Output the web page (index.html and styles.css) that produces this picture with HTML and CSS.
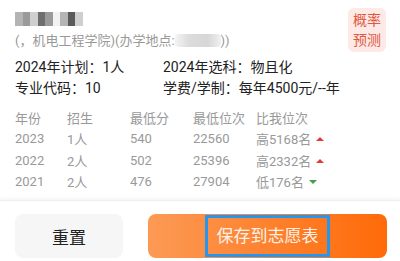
FILE: index.html
```html
<!DOCTYPE html>
<html lang="zh-CN">
<head>
    <meta charset="UTF-8">
    <meta name="viewport" content="width=device-width, initial-scale=1.0">
    <title>专业详情</title>
    <link rel="stylesheet" href="styles.css">
</head>
<body>

    <div class="card">
        <div class="head">
            <div class="head-text">
                <div class="blur-name">
                    <span class="px g1"></span><span class="px g2"></span><span class="px g3"></span><span class="px g4"></span><span class="px g2"></span><span class="px g5"></span><span class="px g1"></span><span class="px g6"></span><span class="px g3"></span>
                </div>
                <p class="school">(，机电工程学院)(办学地点:<span class="blur-place"></span>))</p>
            </div>
            <div class="badge">概率<br>预测</div>
        </div>

        <div class="info">
            <span>2024年计划：1人</span>
            <span>2024年选科：物且化</span>
            <span>专业代码：10</span>
            <span>学费/学制：每年4500元/--年</span>
        </div>

        <table class="history">
            <thead>
                <tr><th>年份</th><th>招生</th><th>最低分</th><th>最低位次</th><th>比我位次</th></tr>
            </thead>
            <tbody>
                <tr><td>2023</td><td>1人</td><td>540</td><td>22560</td><td>高5168名 <i class="up"></i></td></tr>
                <tr><td>2022</td><td>2人</td><td>502</td><td>25396</td><td>高2332名 <i class="up"></i></td></tr>
                <tr><td>2021</td><td>2人</td><td>476</td><td>27904</td><td>低176名 <i class="down"></i></td></tr>
            </tbody>
        </table>
    </div>

    <div class="actions">
        <button class="btn-reset">重置</button>
        <button class="btn-save"><span class="focus">保存到志愿表</span></button>
    </div>

</body>
</html>
```

FILE: styles.css
```css
body {
    margin: 0;
    background-color: #fff;
    font-family: Roboto, "Noto Sans CJK SC", sans-serif;
    color: #333;
}

.card {
    padding: 8px 14px 0 15px;
    height: 192px;
}

.head {
    display: flex;
    justify-content: space-between;
}

.blur-name {
    display: flex;
    margin-top: 4px;
    height: 14px;
}

.px {
    width: 7.5px;
    height: 14px;
}

.g1 { background: #b4b4b4; }
.g2 { background: #9a9a9a; }
.g3 { background: #cfcfcf; }
.g4 { background: #6e6e6e; }
.g5 { background: #f2f2f2; }
.g6 { background: #5a5a5a; }

.school {
    margin: 6px 0 0;
    font-size: 13px;
    color: #999;
    line-height: 18px;
}

.blur-place {
    display: inline-block;
    width: 46px;
    height: 13px;
    vertical-align: -2px;
    background: linear-gradient(90deg, #f4f4f4, #dcdcdc 30%, #d6d6d6 70%, #f0f0f0);
    border-radius: 4px;
}

.badge {
    width: 38px;
    height: 44px;
    background-color: #fde9e6;
    color: #e2583e;
    font-size: 14px;
    line-height: 20px;
    text-align: center;
    border-radius: 6px;
    padding-top: 2px;
    box-sizing: border-box;
}

.info {
    display: grid;
    grid-template-columns: 148px 1fr;
    row-gap: 3px;
    margin-top: 6px;
    font-size: 14px;
    line-height: 18px;
    color: #222;
}

.history {
    margin-top: 10px;
    border-collapse: collapse;
    font-size: 13px;
    color: #999;
}

.history th, .history td {
    text-align: left;
    font-weight: normal;
    padding: 0;
    height: 21.3px;
}

.history th:nth-child(1) { width: 52px; }
.history th:nth-child(2) { width: 63px; }
.history th:nth-child(3) { width: 63px; }
.history th:nth-child(4) { width: 63px; }

.up, .down {
    display: inline-block;
    width: 0;
    height: 0;
    margin-left: 2px;
    border-left: 4px solid transparent;
    border-right: 4px solid transparent;
    vertical-align: 3px;
}

.up { border-bottom: 4px solid #e53935; }
.down { border-top: 4px solid #43a047; }

.actions {
    display: flex;
    gap: 25px;
    padding: 13px 13px 0 15px;
    border-top: 1px solid #eee;
    box-shadow: 0 -2px 3px rgba(0, 0, 0, 0.04);
}

.actions button {
    height: 44px;
    border: none;
    border-radius: 8px;
    font-family: Roboto, "Noto Sans CJK SC", sans-serif;
    font-size: 17px;
}

.btn-reset {
    width: 108px;
    background-color: #f6f6f6;
    color: #222;
}

.btn-save {
    flex: 1;
    background: linear-gradient(90deg, #fc9a55, #ff6a08);
    color: #fdf1e8;
    display: flex;
    justify-content: center;
    align-items: flex-end;
    padding: 0;
}

.focus {
    width: 119px;
    height: 36px;
    line-height: 36px;
    border: 3px solid #2196f3;
    margin-bottom: 1px;
}
```
